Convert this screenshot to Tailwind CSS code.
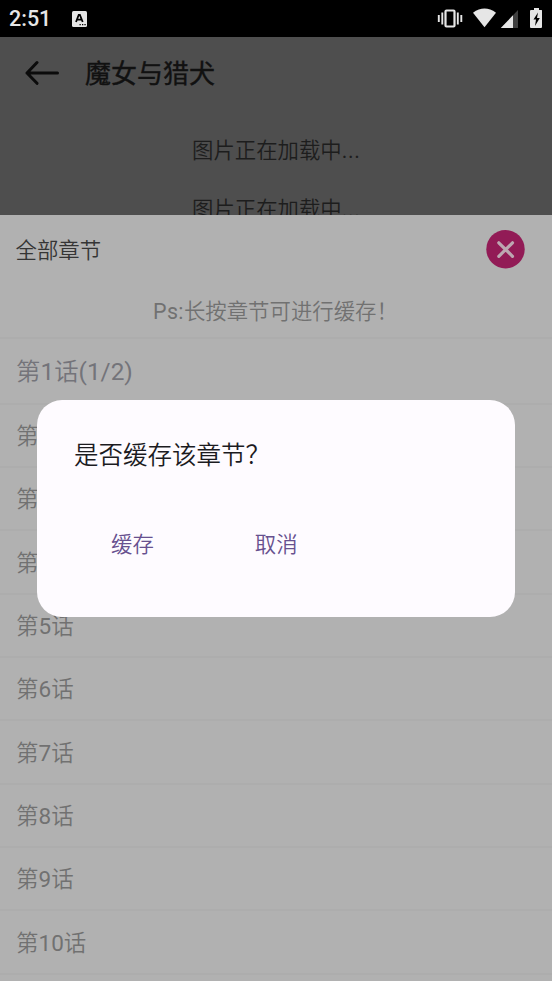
<!DOCTYPE html>
<html lang="zh-CN">
<head>
<meta charset="utf-8">
<title>魔女与猎犬</title>
<script src="https://cdn.jsdelivr.net/npm/@tailwindcss/browser@4"></script>
</head>
<body class="bg-black">
<div class="relative flex h-[981px] w-[552px] flex-col overflow-hidden bg-[#4e4e4e] font-[Roboto,'Noto_Sans_CJK_SC',sans-serif] text-[21.4px] leading-none font-[350] whitespace-nowrap">
  <header class="flex h-[37px] shrink-0 items-center bg-black pl-[9px] text-[#e6e6e6]">
    <span class="w-[63px] pt-px text-[21.5px] font-medium">2:51</span>
    <svg class="h-4 w-[15px]" viewBox="0 0 15 16"><rect width="15" height="16" rx="1.5" fill="#e6e6e6"/><path d="M4 11 6.7 4h1.2l2.8 7M5.3 8.7h4" fill="none" stroke="#000" stroke-width="1.8"/><path d="M7.5 13.7h1.3M10 13.7h1.3M12.4 13.7h1.3" stroke="#000" stroke-width="1.3"/></svg>
    <svg class="ml-auto h-[37px] w-[115px]" viewBox="437 0 115 37" fill="#e6e6e6">
      <rect x="445.5" y="10.5" width="9" height="16" rx="1" fill="none" stroke="#e6e6e6" stroke-width="2.2"/>
      <path d="M442.3 12.5v12M438.8 15v7M457.8 12.5v12M461.3 15v7" stroke="#e6e6e6" stroke-width="1.9"/>
      <path d="M473 12.7Q484.500 4.500 496 12.700L484.500 27.300Z"/>
      <path d="M518 10v18h-17Z" fill="#404040"/><path d="M513 15.300V28h-12.200Z"/>
      <path d="M531.500 10h2.500V8h5v2h2.500q.5 0 .5 .5V27q0 1-1 1h-10q-1 0-1-1V11q0-1 1-1Z"/>
      <path d="M538 12.500 533.500 19.500h2.500l-1 6.500 4.800-8h-2.800Z" fill="#000"/>
    </svg>
  </header>
  <div class="flex h-[72px] shrink-0 items-center pl-[25px] text-[#111]">
    <svg class="h-[26px] w-[35px]" viewBox="0 0 35 26" fill="none" stroke="#0b0b0b" stroke-width="3" stroke-linecap="round" stroke-linejoin="round"><path d="M2 13H32.500M12 2.500 2 13l10 10.300"/></svg>
    <h1 class="mt-[2px] ml-[25px] text-[26px] leading-[30px] font-normal [-webkit-text-stroke:0.4px_#111]">魔女与猎犬</h1>
  </div>
  <main class="h-[106px] shrink-0 overflow-hidden pl-[192px] text-[#1d1d1d]">
    <p class="mt-[27px] h-[59px] leading-[30px]">图片正在加载中<span class="font-normal tracking-[0.6px]">...</span></p>
    <p class="h-[59px] leading-[30px]">图片正在加载中<span class="font-normal tracking-[0.6px]">...</span></p>
  </main>
  <section class="flex flex-1 flex-col bg-[#b1b1b1] text-[#717171]">
    <div class="flex h-[69px] shrink-0 items-center justify-between pr-[27.500px] pl-[15.500px] text-[#353535]">
      <h2 class="pt-[2px] leading-[30px]">全部章节</h2>
      <svg class="h-[39px] w-[39px]" viewBox="0 0 39 39"><circle cx="19.500" cy="19.200" r="19.200" fill="#921b56"/><path d="M12.800 12.800 26.500 26.300M26.500 12.800 12.800 26.300" stroke="#bca7b1" stroke-width="3.200" stroke-linecap="round"/></svg>
    </div>
    <p class="h-[53px] shrink-0 pt-[13px] pl-[153px] leading-[30px]"><span class="font-normal tracking-[0.4px]">Ps:</span>长按章节可进行缓存！</p>
    <ul class="flex flex-col text-[22.500px]">
      <li class="flex h-[65.500px] shrink-0 items-center border-t-2 border-[#adadad] pt-[2px] pl-4 text-[24.400px] text-[#74747a]">第<span class="font-normal">1</span>话<span class="font-normal">(1/2)</span></li>
      <li class="flex h-[63.350px] shrink-0 items-center border-t-2 border-[#adadad] pt-[2px] pl-4">第<span class="font-normal">2</span>话</li>
      <li class="flex h-[63.350px] shrink-0 items-center border-t-2 border-[#adadad] pt-[2px] pl-4">第<span class="font-normal">3</span>话</li>
      <li class="flex h-[63.350px] shrink-0 items-center border-t-2 border-[#adadad] pt-[2px] pl-4">第<span class="font-normal">4</span>话</li>
      <li class="flex h-[63.350px] shrink-0 items-center border-t-2 border-[#adadad] pt-[2px] pl-4">第<span class="font-normal">5</span>话</li>
      <li class="flex h-[63.350px] shrink-0 items-center border-t-2 border-[#adadad] pt-[2px] pl-4">第<span class="font-normal">6</span>话</li>
      <li class="flex h-[63.350px] shrink-0 items-center border-t-2 border-[#adadad] pt-[2px] pl-4">第<span class="font-normal">7</span>话</li>
      <li class="flex h-[63.350px] shrink-0 items-center border-t-2 border-[#adadad] pt-[2px] pl-4">第<span class="font-normal">8</span>话</li>
      <li class="flex h-[63.350px] shrink-0 items-center border-t-2 border-[#adadad] pt-[2px] pl-4">第<span class="font-normal">9</span>话</li>
      <li class="flex h-[63.350px] shrink-0 items-center border-t-2 border-[#adadad] pt-[2px] pl-4">第<span class="font-normal">10</span>话</li>
      <li class="h-4 shrink-0 border-t-2 border-[#adadad]"></li>
    </ul>
  </section>
  <div role="dialog" class="absolute top-[400px] left-[37px] h-[217px] w-[478px] rounded-[25px] bg-[#fefbff] pt-[41px] pl-[37px]">
    <p class="text-[24.500px] leading-[30px] text-[#1c1b1f]">是否缓存该章节？</p>
    <div class="flex gap-[101px] pt-[59px] pl-[37px] leading-[30px] text-[#67508f]">
      <button>缓存</button>
      <button>取消</button>
    </div>
  </div>
</div>
</body>
</html>
